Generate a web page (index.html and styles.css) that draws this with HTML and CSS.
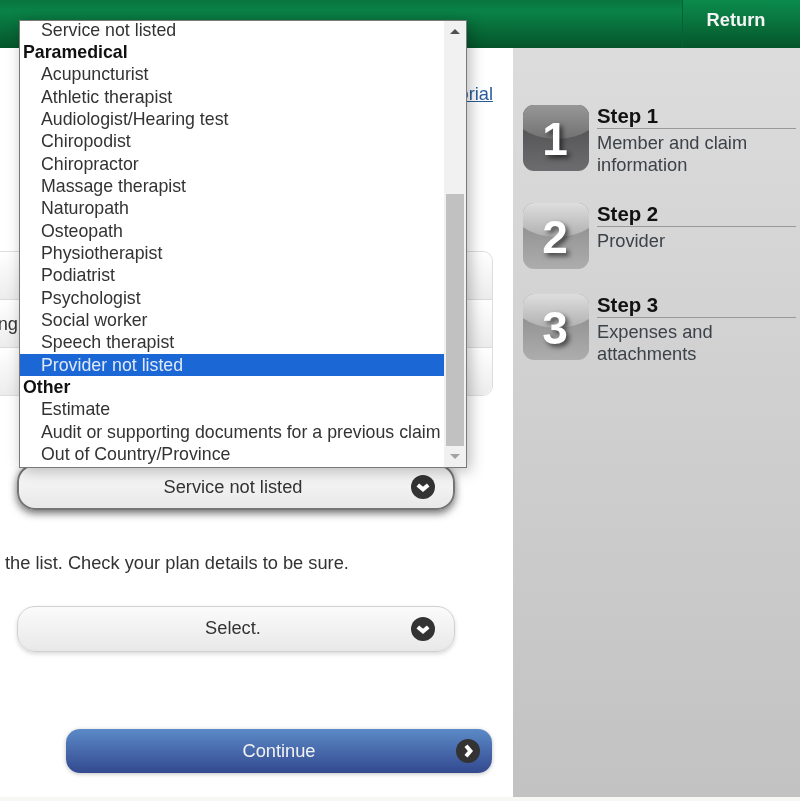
FILE: index.html
```html
<!DOCTYPE html>
<html lang="en">
<head>
    <meta charset="UTF-8">
    <meta name="viewport" content="width=device-width, initial-scale=1.0">
    <title>Submit a claim</title>
    <link rel="stylesheet" href="styles.css">
</head>
<body>
    <div class="page">
        <div class="topbar">
            <a href="#" class="return-link">Return</a>
        </div>

        <div class="main">
            <div class="tutorial"><a href="#">Tutorial</a></div>

            <div class="panel">
                <div class="panel-row"></div>
                <div class="panel-row">ng</div>
                <div class="panel-row"></div>
            </div>

            <div class="select select-open">
                <span>Service not listed</span>
                <svg class="round-icon" viewBox="0 0 24 24"><circle cx="12" cy="12" r="12"/><path d="M6.8 10 12 14.4 17.2 10" /></svg>
            </div>

            <p class="note">the list. Check your plan details to be sure.</p>

            <div class="select select-second">
                <span>Select.</span>
                <svg class="round-icon" viewBox="0 0 24 24"><circle cx="12" cy="12" r="12"/><path d="M6.8 10 12 14.4 17.2 10" /></svg>
            </div>

            <a href="#" class="continue">
                <span>Continue</span>
                <svg class="round-icon" viewBox="0 0 24 24"><circle cx="12" cy="12" r="12"/><path d="M10 6.8 14.4 12 10 17.2" /></svg>
            </a>
        </div>

        <div class="sidebar">
            <div class="step step-first">
                <div class="step-icon step-icon-active"><span>1</span></div>
                <div class="step-text">
                    <h3>Step 1</h3>
                    <p>Member and claim information</p>
                </div>
            </div>
            <div class="step">
                <div class="step-icon"><span>2</span></div>
                <div class="step-text">
                    <h3>Step 2</h3>
                    <p>Provider</p>
                </div>
            </div>
            <div class="step">
                <div class="step-icon"><span>3</span></div>
                <div class="step-text">
                    <h3>Step 3</h3>
                    <p>Expenses and attachments</p>
                </div>
            </div>
        </div>

        <div class="footer"></div>

        <!-- open list of the first select, sits over the page -->
        <div class="dropdown">
            <div class="options">
                <div class="option">Service not listed</div>
                <div class="group">Paramedical</div>
                <div class="option">Acupuncturist</div>
                <div class="option">Athletic therapist</div>
                <div class="option">Audiologist/Hearing test</div>
                <div class="option">Chiropodist</div>
                <div class="option">Chiropractor</div>
                <div class="option">Massage therapist</div>
                <div class="option">Naturopath</div>
                <div class="option">Osteopath</div>
                <div class="option">Physiotherapist</div>
                <div class="option">Podiatrist</div>
                <div class="option">Psychologist</div>
                <div class="option">Social worker</div>
                <div class="option">Speech therapist</div>
                <div class="option selected">Provider not listed</div>
                <div class="group">Other</div>
                <div class="option">Estimate</div>
                <div class="option">Audit or supporting documents for a previous claim</div>
                <div class="option">Out of Country/Province</div>
            </div>
            <div class="scrollbar">
                <div class="arrow arrow-up"></div>
                <div class="track"><div class="thumb"></div></div>
                <div class="arrow arrow-down"></div>
            </div>
        </div>
    </div>
</body>
</html>
```

FILE: styles.css
```css
html, body {
    margin: 0;
    padding: 0;
    height: 100%;
    overflow: hidden;
}

body {
    font-family: 'Liberation Sans', Arial, sans-serif;
    font-size: 18.25px;
    color: #333;
    background-color: #fff;
}

.page {
    position: relative;
    display: grid;
    grid-template-columns: 513px 1fr;
    grid-template-rows: 48px 1fr 4px;
    height: 100vh;
    overflow: hidden;
    filter: blur(0.45px);
}

.topbar {
    grid-column: 1 / 3;
    display: flex;
    justify-content: flex-end;
    background: linear-gradient(#08753d 0, #0a8348 22%, #05552a 100%);
}

.return-link {
    width: 118px;
    display: flex;
    align-items: flex-start;
    justify-content: center;
    padding: 9px 11px 0 0;
    box-sizing: border-box;
    font-weight: bold;
    color: #f4f4f4;
    text-decoration: none;
    background: linear-gradient(#0a8a4c 0, #0a7f45 25%, #05552a 100%);
    border-left: 1px solid #076136;
}

.main {
    display: flex;
    flex-direction: column;
    min-width: 0;
}

.tutorial {
    margin-top: 35px;
    padding-right: 20px;
    line-height: 21px;
    text-align: right;
}

.tutorial a {
    color: #2a5d9f;
}

.panel {
    margin: 147px 20px 0 -20px;
    border: 1px solid #dedede;
    border-radius: 10px;
    height: 145px;
    box-sizing: border-box;
    display: flex;
    flex-direction: column;
}

.panel-row {
    flex: 1;
    display: flex;
    align-items: center;
    justify-content: flex-end;
    padding-right: 474px;
    background: linear-gradient(#fff, #ececec);
    border-bottom: 1px solid #dadada;
}

.panel-row:first-child {
    border-radius: 10px 10px 0 0;
}

.panel-row:last-child {
    border-radius: 0 0 10px 10px;
    border-bottom: 0;
}

.select {
    position: relative;
    display: flex;
    align-items: center;
    justify-content: center;
    width: 438px;
    height: 46px;
    margin-left: 17px;
    padding-right: 6px;
    box-sizing: border-box;
    border: 1px solid #d0d0d0;
    border-radius: 18px;
    background: linear-gradient(#fbfbfb, #e8e8e8);
    box-shadow: 0 2px 4px rgba(0, 0, 0, 0.15);
}

.select-open {
    margin-top: 68px;
    border: 2px solid #757575;
    box-shadow: 0 3px 8px rgba(0, 0, 0, 0.6);
}

.select-second {
    margin-top: 33px;
}

.select-second span {
    margin-top: -2px;
}

.round-icon {
    position: absolute;
    right: 19px;
    top: 50%;
    width: 24px;
    height: 24px;
    margin-top: -12px;
}

.select-open .round-icon {
    right: 18px;
}

.round-icon circle {
    fill: #333;
}

.round-icon path {
    fill: none;
    stroke: #fff;
    stroke-width: 4;
}

.note {
    margin: 43px 0 0 5px;
    line-height: 20px;
}

.continue {
    position: relative;
    display: flex;
    align-items: center;
    justify-content: center;
    width: 426px;
    height: 44px;
    margin: 77px 0 0 66px;
    border-radius: 14px;
    color: #f2f2f2;
    text-decoration: none;
    background: linear-gradient(#5b8ac7, #33498f);
    box-shadow: 0 1px 4px rgba(0, 0, 0, 0.25);
}

.continue .round-icon {
    right: 12px;
}

.sidebar {
    display: flex;
    flex-direction: column;
    gap: 25px;
    padding: 57px 4px 0 10px;
    background: linear-gradient(#dcdcdc, #c2c2c2);
}

.step {
    display: flex;
    gap: 8px;
    align-items: flex-start;
}

.step-first {
    padding-bottom: 2px;
}

.step-icon {
    position: relative;
    flex: none;
    width: 66px;
    height: 66px;
    overflow: hidden;
    display: flex;
    align-items: center;
    justify-content: center;
    border-radius: 11px;
    background: linear-gradient(#858585, #adadad);
}

.step-icon::before {
    content: '';
    position: absolute;
    left: -25%;
    top: -60%;
    width: 150%;
    height: 112%;
    border-radius: 50%;
    background: linear-gradient(#e2e2e2 50%, #b0b0b0 100%);
}

.step-icon-active {
    background: linear-gradient(#4a4a4c, #6c6c6e);
}

.step-icon-active::before {
    background: linear-gradient(#9a9a9a 50%, #727272 100%);
}

.step-icon span {
    position: relative;
    top: 1px;
    left: -1px;
    font-size: 46px;
    font-weight: bold;
    line-height: 1;
    color: #fff;
    text-shadow: 3px 3px 5px rgba(0, 0, 0, 0.6);
}

.step-text {
    flex: 1;
}

.step-text h3 {
    margin: 0;
    font-size: 20.4px;
    line-height: 23px;
    color: #111;
    border-bottom: 1px solid #999;
}

.step-text p {
    margin: 3px 0 0;
    line-height: 22px;
    color: #3c4248;
}

.footer {
    grid-column: 1 / 3;
    background-color: #f7f7f5;
}

.dropdown {
    position: absolute;
    left: 19px;
    top: 20px;
    width: 448px;
    height: 448px;
    box-sizing: border-box;
    display: flex;
    font-size: 17.75px;
    background-color: #fff;
    border: 1px solid #7a7a7a;
    box-shadow: 3px 3px 14px rgba(0, 0, 0, 0.28);
}

.options {
    flex: 1;
    min-width: 0;
    overflow: hidden;
}

.option, .group {
    height: 22.35px;
    line-height: 22.35px;
    white-space: nowrap;
    position: relative;
    top: -2.5px;
}

.option {
    padding-left: 21px;
}

.group {
    padding-left: 3px;
    font-weight: bold;
    color: #111;
}

.selected {
    background-color: #1b67d6;
    color: #dfe9f8;
}

.scrollbar {
    flex: none;
    width: 22px;
    display: flex;
    flex-direction: column;
    background-color: #f1f1f1;
}

.arrow {
    flex: none;
    height: 21px;
    display: flex;
    align-items: center;
    justify-content: center;
}

.arrow::before {
    content: '';
    border-left: 5px solid transparent;
    border-right: 5px solid transparent;
}

.arrow-up::before {
    border-bottom: 5px solid #505050;
}

.arrow-down::before {
    border-top: 5px solid #a3a3a3;
}

.track {
    flex: 1;
    display: flex;
    flex-direction: column;
    justify-content: flex-end;
    padding: 0 2px;
}

.thumb {
    height: 252px;
    background-color: #c1c1c1;
}
```
